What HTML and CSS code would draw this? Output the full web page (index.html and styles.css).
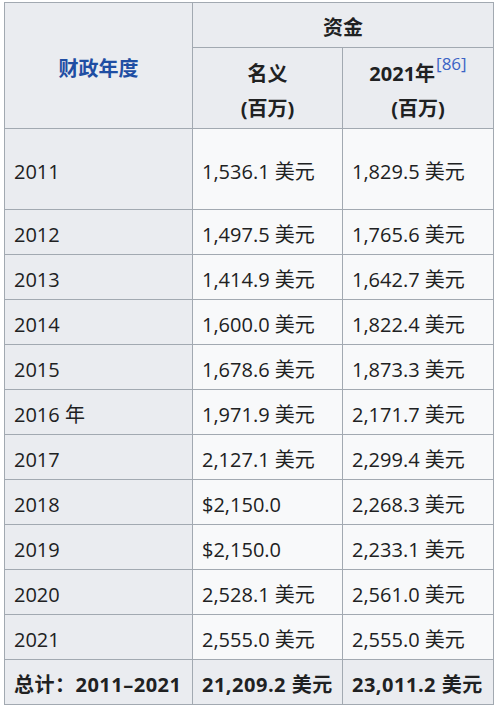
FILE: index.html
```html
<!DOCTYPE html>
<html lang="zh">
<head>
<meta charset="utf-8">
<link rel="stylesheet" href="styles.css">
</head>
<body>
<table class="wikitable">
  <colgroup>
    <col class="c1">
    <col class="c2">
    <col class="c3">
  </colgroup>
  <thead>
    <tr class="h1">
      <th rowspan="2"><a class="link" href="#">财政年度</a></th>
      <th colspan="2">资金</th>
    </tr>
    <tr class="h2">
      <th><span class="hl">名义</span><span class="hl">(百万)</span></th>
      <th><span class="hl">2021年<sup class="ref">[86]</sup></span><span class="hl">(百万)</span></th>
    </tr>
  </thead>
  <tbody>
    <tr class="tall"><th class="yr">2011</th><td>1,536.1 美元</td><td>1,829.5 美元</td></tr>
    <tr><th class="yr">2012</th><td>1,497.5 美元</td><td>1,765.6 美元</td></tr>
    <tr><th class="yr">2013</th><td>1,414.9 美元</td><td>1,642.7 美元</td></tr>
    <tr><th class="yr">2014</th><td>1,600.0 美元</td><td>1,822.4 美元</td></tr>
    <tr><th class="yr">2015</th><td>1,678.6 美元</td><td>1,873.3 美元</td></tr>
    <tr><th class="yr">2016 年</th><td>1,971.9 美元</td><td>2,171.7 美元</td></tr>
    <tr><th class="yr">2017</th><td>2,127.1 美元</td><td>2,299.4 美元</td></tr>
    <tr><th class="yr">2018</th><td>$2,150.0</td><td>2,268.3 美元</td></tr>
    <tr><th class="yr">2019</th><td>$2,150.0</td><td>2,233.1 美元</td></tr>
    <tr><th class="yr">2020</th><td>2,528.1 美元</td><td>2,561.0 美元</td></tr>
    <tr><th class="yr">2021</th><td>2,555.0 美元</td><td>2,555.0 美元</td></tr>
    <tr class="total"><th class="yr">总计：2011–2021</th><th class="tv">21,209.2 美元</th><th class="tv">23,011.2 美元</th></tr>
  </tbody>
</table>
</body>
</html>
```

FILE: styles.css
```css
html, body {
  margin: 0;
  padding: 0;
  background: #ffffff;
}
body {
  padding: 2px 0 0 4px;
  font-family: "Open Sans", "Noto Sans CJK SC", sans-serif;
  font-size: 20px;
  color: #202122;
}
.wikitable {
  border-collapse: collapse;
  table-layout: fixed;
  width: 489px;
  background: #f8f9fa;
  border: 1px solid #a2a9b1;
}
.c1 { width: 188px; }
.c2 { width: 150px; }
.c3 { width: 151px; }
.wikitable th,
.wikitable td {
  border: 1px solid #a2a9b1;
  padding: 6px 9px 0;
  vertical-align: middle;
  line-height: 28px;
}
.wikitable th {
  background: #eaecf0;
  text-align: center;
  font-weight: 700;
}
.wikitable td {
  text-align: left;
}
.h1 { height: 45px; }
.h2 { height: 81px; }
.hl {
  display: block;
  line-height: 35px;
}
.link {
  color: #1f4ea3;
  text-decoration: none;
}
.ref {
  font-size: 17px;
  font-weight: 400;
  color: #3a63c5;
  line-height: 0;
  vertical-align: 11px;
  margin-left: 1px;
}
tbody tr { height: 45px; }
tbody tr.tall { height: 81px; }
.wikitable th.yr {
  text-align: left;
  font-weight: 400;
}
.total th.yr,
.total th.tv {
  font-weight: 700;
  text-align: left;
  white-space: nowrap;
  letter-spacing: 0.5px;
}
.total th.tv {
  padding: 6px 0 0 9px;
}
```
